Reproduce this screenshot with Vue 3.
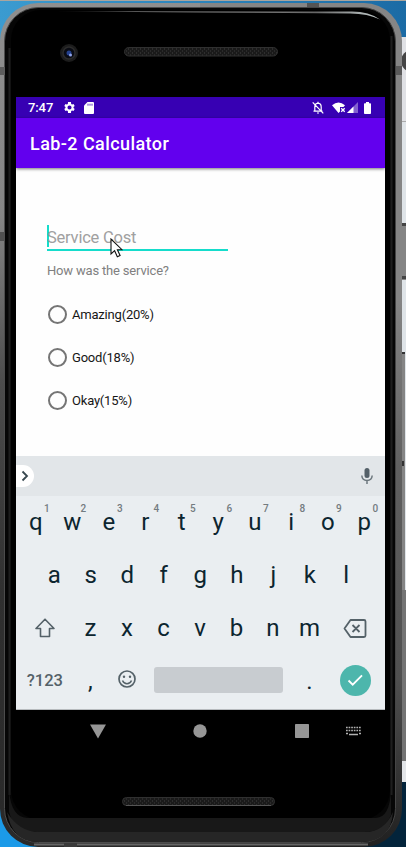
<script setup>
import { ref } from 'vue'

const options = ['Amazing(20%)', 'Good(18%)', 'Okay(15%)']
const topRow = 'qwertyuiop'.split('').map((k, i) => ({ k, n: (i + 1) % 10 }))
const midRow = 'asdfghjkl'.split('')
const lowRow = 'zxcvbnm'.split('')
const rating = ref(null)
</script>

<template>
  <div class="stage">
    <svg class="device" viewBox="0 0 406 847" aria-hidden="true">
      <defs>
        <linearGradient id="sky" x1="0" y1="0" x2="1" y2="0">
          <stop offset="0" stop-color="#3b9bd0" />
          <stop offset="1" stop-color="#1b6ba5" />
        </linearGradient>
        <linearGradient id="leftEdge" x1="0" y1="0" x2="0" y2="1">
          <stop offset="0" stop-color="#8f8f8f" />
          <stop offset=".25" stop-color="#858585" />
          <stop offset=".45" stop-color="#4c4c4c" />
          <stop offset=".7" stop-color="#303030" />
          <stop offset="1" stop-color="#292929" />
        </linearGradient>
        <linearGradient id="rightEdge" x1="0" y1="0" x2="0" y2="1">
          <stop offset="0" stop-color="#858585" />
          <stop offset=".35" stop-color="#858585" />
          <stop offset=".55" stop-color="#606060" />
          <stop offset=".8" stop-color="#505050" />
          <stop offset="1" stop-color="#202020" />
        </linearGradient>
        <linearGradient id="shine" x1="0" y1="0" x2="1" y2="0">
          <stop offset="0" stop-color="#222" />
          <stop offset=".25" stop-color="#aaa" />
          <stop offset=".8" stop-color="#666" />
          <stop offset="1" stop-color="#c4cccc" />
        </linearGradient>
        <pattern id="mesh" width="4" height="4" patternUnits="userSpaceOnUse">
          <rect width="4" height="4" fill="#1a1a1a" />
          <rect x="0" y="0" width="1" height="2" fill="#2e2e2e" />
          <rect x="2" y="2" width="1" height="2" fill="#2a2a2a" />
        </pattern>
        <clipPath id="leftHalf"><rect width="200" height="847" /></clipPath>
        <clipPath id="rightHalf"><rect x="200" width="206" height="847" /></clipPath>
      </defs>
      <rect width="406" height="847" fill="url(#sky)" />
      <rect y="790" width="100" height="57" fill="#1b9ae8" />
      <rect width="406" height="1" fill="#aaa59e" />
      <rect x="390" y="37" width="16" height="84" fill="#e0e1e5" />
      <rect x="401" y="121" width="5" height="1" fill="#aaa" />
      <rect x="396" y="122" width="10" height="468" fill="#dfe4e8" />
      <circle cx="412" cy="61" r="11" fill="#454545" />
      <rect x="396" y="590" width="10" height="171" fill="#747474" />
      <rect x="396" y="761" width="10" height="21" fill="#e3e5e8" />
      <rect x="340" y="782" width="66" height="65" fill="#03243b" />
      <rect x="402" y="223" width="4" height="57" fill="#858585" />
      <rect x="402" y="223" width="4" height="3" fill="#444" />
      <rect x="402" y="276" width="4" height="3" fill="#444" />
      <rect x="401" y="352" width="4" height="238" fill="#858585" />
      <rect x="401" y="352" width="4" height="2" fill="#333" />
      <rect x="401" y="461" width="3" height="5" fill="#333" />

      <g clip-path="url(#leftHalf)">
        <rect x="0" y="3" width="402" height="844" rx="38" fill="url(#leftEdge)" />
        <rect x="4.500" y="7.500" width="392" height="835" rx="34" fill="#060606" stroke="#4c4c4c" />
      </g>
      <g clip-path="url(#rightHalf)">
        <rect x="0" y="3" width="402" height="844" rx="38" fill="url(#rightEdge)" />
        <rect x="4.500" y="7.500" width="391" height="835" rx="34" fill="#060606" stroke="#454545" />
      </g>
      <rect y="67" width="5" height="8" fill="#5c5c5c" />
      <rect y="232" width="5" height="9" fill="#505050" />
      <rect x="396" y="66" width="6" height="9" fill="#5a5a5a" />
      <rect x="307" y="3" width="12" height="4" fill="#555" />
      <path d="M9.500 48V795M391.500 36V795" stroke="#1e1e1e" stroke-width="2" />
      <rect x="11" y="10" width="379" height="810" rx="30" fill="#000" />
      <path d="M9 790q2 27 18 28h349q14-1 15-28v25q-7 17-27 17H38Q14 832 9 812Z" fill="#181818" />
      <path d="M7 812q12 20 32 20h326q19 0 28-20-2 29-30 30H38Q12 842 7 812" fill="#262626" />
      <path d="M34 844.500h334" stroke="#666" stroke-width="2" />
      <rect x="64" y="843" width="13" height="4" fill="#3a3a3a" />
      <path d="M55 11.500H352q17 0 28 8-12-6-30-6Z" fill="url(#shine)" />

      <circle cx="69" cy="53" r="9" fill="#1c1c1c" />
      <circle cx="69" cy="53" r="6" fill="#090b13" stroke="#2c2c2c" stroke-width="1.500" />
      <circle cx="69" cy="53" r="2.500" fill="#24408c" />
      <circle cx="70.500" cy="55" r="1.500" fill="#8fa3ea" />
      <rect x="124.500" y="47.500" width="153" height="8.500" rx="4.200" fill="url(#mesh)" stroke="#303030" />
      <rect x="122.500" y="797.500" width="152" height="8" rx="4" fill="url(#mesh)" stroke="#303030" />
      <path d="M126 805.500h145" stroke="#555" />
    </svg>

    <main class="screen">
      <div class="status">
        <span class="clock">7:47</span>
        <svg class="gear" viewBox="0 0 24 24"><path fill="#fff" fill-rule="evenodd" d="M19.400 13a8 8 0 0 0 0-2l2.200-1.700-2.200-3.800-2.600 1a8 8 0 0 0-1.700-1L14.700 2h-5.400l-.4 3.500a8 8 0 0 0-1.700 1l-2.600-1-2.200 3.800L4.600 11a8 8 0 0 0 0 2l-2.200 1.700 2.200 3.800 2.600-1a8 8 0 0 0 1.700 1l.4 3.500h5.400l.4-3.500a8 8 0 0 0 1.700-1l2.600 1 2.200-3.800ZM12 15.800a3.800 3.800 0 1 1 0-7.600 3.800 3.800 0 0 1 0 7.600Z" /></svg>
        <svg class="card" viewBox="0 0 10 12"><path fill="#fff" d="M3.500 0H9a1 1 0 0 1 1 1v10a1 1 0 0 1-1 1H1a1 1 0 0 1-1-1V3.500Z" /><path stroke="#3700b3" d="M4 1.700v2M6 1.700v2M8 1.700v2" stroke-width=".8" /></svg>
        <span class="grow"></span>
        <svg class="bell" viewBox="0 0 12 13"><path d="M2.800 10V6q0-3.500 3.200-3.800Q9.200 2.500 9.200 6v4M1.500 10.200h9M6 .7v1.500M5 12h2M.7 1.300l10.600 11" fill="none" stroke="#fff" stroke-width="1.200" /></svg>
        <svg class="wifi" viewBox="0 0 14 12"><path fill="#fff" d="M0 3.200Q6.500-2 13 3.200L11.500 5H8v4.500L6.500 11Z" /><path d="m9.200 6.300 3.500 3.500m0-3.500L9.200 9.800" stroke="#fff" stroke-width="1.300" /></svg>
        <svg class="signal" viewBox="0 0 11 11"><path d="M11 0v11H0Z" fill="#8260d0" /><path d="M6.500 4.500V11H0Z" fill="#fff" /></svg>
        <svg class="battery" viewBox="0 0 7 12"><path fill="#fff" d="M2 0h3v1.300h1.200q.8 0 .8.800v9q0 .9-.8.900H.8Q0 12 0 11.100v-9q0-.8.800-.8H2Z" /></svg>
      </div>
      <header class="appbar">Lab-2 Calculator</header>

      <section class="form">
        <div class="field">
          <span class="hint">Service Cost</span>
          <svg class="pointer" viewBox="0 0 13 20"><path d="M1 1v15l3.600-3.300 2.700 6 2.800-1.300-2.700-5.700H12Z" fill="#fff" stroke="#111" stroke-width="1.100" /></svg>
        </div>
        <p class="question">How was the service?</p>
        <div class="options">
          <label v-for="o in options" :key="o" class="option" @click="rating = o">
            <span class="radio" :class="{ on: rating === o }"></span>{{ o }}
          </label>
        </div>
      </section>

      <section class="keyboard">
        <div class="strip">
          <span class="expand"><svg viewBox="0 0 8 12"><path d="m1.500 1.500 4.500 4.500-4.500 4.500" fill="none" stroke="#37474f" stroke-width="1.800" /></svg></span>
          <svg class="mic" viewBox="0 0 12 16"><rect x="3.500" y="0" width="5" height="10" rx="2.500" fill="#546068" /><path d="M.8 7.500q.4 5 5.200 5t5.200-5M6 12.500V16" fill="none" stroke="#6c777d" stroke-width="1.500" /></svg>
        </div>
        <div class="row">
          <span v-for="t in topRow" :key="t.k" class="key">{{ t.k }}<sup>{{ t.n }}</sup></span>
        </div>
        <div class="row mid">
          <span v-for="k in midRow" :key="k" class="key">{{ k }}</span>
        </div>
        <div class="row low">
          <span class="wide"><svg class="shift" viewBox="0 0 20 20"><path d="M10 1.200 1 10.500h4.500V18.500h9V10.500H19Z" fill="none" stroke="#546168" stroke-width="1.600" stroke-linejoin="round" /></svg></span>
          <span v-for="k in lowRow" :key="k" class="key">{{ k }}</span>
          <span class="wide"><svg class="erase" viewBox="0 0 24 19"><path d="M7.500 1H21q1.500 0 1.500 1.500v14Q22.500 18 21 18H7.500L1.500 9.500Z M9.500 6l7 7m0-7-7 7" fill="none" stroke="#546168" stroke-width="1.800" stroke-linejoin="round" /></svg></span>
        </div>
        <div class="row last">
          <span class="wide symbols">?123</span>
          <span class="key">,</span>
          <span class="key"><svg class="smile" viewBox="0 0 18 18"><circle cx="9" cy="9" r="8" fill="none" stroke="#546168" stroke-width="1.700" /><circle cx="6" cy="6.800" r="1.200" fill="#546168" /><circle cx="12" cy="6.800" r="1.200" fill="#546168" /><path d="M4.500 10.500q1.500 3.300 4.500 3.300t4.500-3.300" fill="none" stroke="#546168" stroke-width="1.500" /></svg></span>
          <span class="space"></span>
          <span class="key">.</span>
          <span class="wide"><span class="done"><svg viewBox="0 0 18 14"><path d="m1.500 7 4.500 4.500L16 1.500" fill="none" stroke="#fff" stroke-width="2" /></svg></span></span>
        </div>
      </section>

      <nav class="nav">
        <svg viewBox="0 0 330 16">
          <path d="M39 1.500h16L47 15.500Z" fill="#969696" />
          <circle cx="149" cy="8" r="6.700" fill="#969696" />
          <rect x="244" y="1" width="14" height="14" rx=".7" fill="#969696" />
          <path d="M295 4.500h15M295 7.500h15" stroke="#b2b2b2" stroke-width="1.600" stroke-dasharray="1.700 .9" />
          <path d="M295 10.500h2M298 11.500h9M308 10.500h2" stroke="#b2b2b2" stroke-width="1.500" />
        </svg>
      </nav>
    </main>
  </div>
</template>

<style>
body { margin: 0; overflow: hidden; }
</style>

<style scoped>
.stage { position: relative; box-sizing: border-box; width: 406px; height: 847px; padding: 97px 21px 0 16px; overflow: hidden; font-family: Roboto, "Liberation Sans", sans-serif; }
.device { position: absolute; inset: 0; width: 406px; height: 847px; }
.screen { position: relative; width: 369px; display: flex; flex-direction: column; }
svg { display: block; flex: none; }
.status { display: flex; align-items: center; box-sizing: border-box; height: 21px; padding: 0 14px 0 12px; background: #3700b3; color: #fff; }
.clock { width: 35px; font-size: 13px; font-weight: 500; letter-spacing: -.1px; }
.gear { width: 13px; height: 13px; margin-right: 8px; }
.card { width: 10px; height: 12px; }
.grow { flex: 1; }
.bell { width: 12px; height: 13px; margin-right: 8px; }
.wifi { width: 14px; height: 12px; margin-right: 1px; }
.signal { width: 11px; height: 11px; margin-right: 6px; }
.battery { width: 7px; height: 12px; }
.appbar { position: relative; box-sizing: border-box; height: 50px; padding-left: 14px; background: #6200ee; color: #fff; font-size: 18px; font-weight: 500; letter-spacing: .42px; line-height: 52px; box-shadow: 0 1px 3px #0008; }
.form { box-sizing: border-box; height: 288px; padding: 57px 31px 0; background: #fefefe; }
.field { position: relative; box-sizing: border-box; width: 181px; height: 26px; border-bottom: 2px solid #15dccb; }
.hint { display: block; box-sizing: border-box; width: 100px; height: 22px; border-left: 2px solid #15dccb; color: #a0a0a0; font-size: 16.500px; letter-spacing: -.22px; line-height: 26px; text-indent: -2px; white-space: nowrap; }
.pointer { position: absolute; left: 63px; top: 13px; width: 13px; height: 20px; }
.question { margin: 11px 0 0; height: 18px; color: #808080; font-size: 13px; line-height: 18px; letter-spacing: -.18px; white-space: nowrap; }
.options { display: flex; flex-direction: column; padding: 13px 0 0 2px; }
.option { display: flex; align-items: center; gap: 5px; height: 43px; color: #161616; font-size: 13px; letter-spacing: -.2px; }
.radio { box-sizing: border-box; width: 19px; height: 19px; border: 2px solid #757575; border-radius: 50%; flex: none; margin-left: -1px; }
.radio.on { background: radial-gradient(#15dccb 45%, transparent 50%); }
.keyboard { box-sizing: border-box; height: 254px; background: #eaeef1; color: #0c252f; border-bottom: 1px solid #b7bbbe; }
.strip { display: flex; align-items: center; justify-content: space-between; height: 40px; padding-right: 12px; background: #e2e6e9; }
.expand { display: flex; align-items: center; justify-content: center; width: 18px; height: 22px; border-radius: 0 11px 11px 0; background: #fff; }
.expand svg { width: 8px; height: 12px; }
.mic { width: 12px; height: 16px; }
.row { display: flex; box-sizing: border-box; height: 52.700px; padding: 0 1.500px; }
.mid { padding: 0 20px; }
.low { padding-left: 1.500px; padding-top: 1px; }
.key { position: relative; display: flex; flex: none; justify-content: center; width: 36.500px; font-size: 24px; line-height: 53px; }
.key sup { position: absolute; left: 26.500px; top: 7px; font-size: 10px; line-height: 12px; color: #737b80; font-weight: 500; }
.wide { display: flex; flex: none; justify-content: center; width: 54.700px; }
.shift { width: 20px; height: 20px; margin-top: 16px; }
.erase { width: 24px; height: 19px; margin-top: 17px; }
.last { height: 52px; padding-left: 1.500px; }
.last .key { line-height: 54px; }
.symbols { font-size: 16.500px; font-weight: 500; color: #546168; line-height: 53px; }
.smile { width: 18px; height: 18px; margin-top: 16px; }
.space { flex: none; width: 129px; height: 26px; margin: 13px 8.500px 0 8.500px; border-radius: 3px; background: #c8ccd0; }
.done { display: flex; align-items: center; justify-content: center; width: 31px; height: 31px; margin-top: 11px; border-radius: 50%; background: #4db6ac; }
.done svg { width: 17px; height: 13px; }
.nav { height: 42px; padding: 13px 0 0 35px; background: #000; }
.nav svg { width: 330px; height: 16px; }
</style>
